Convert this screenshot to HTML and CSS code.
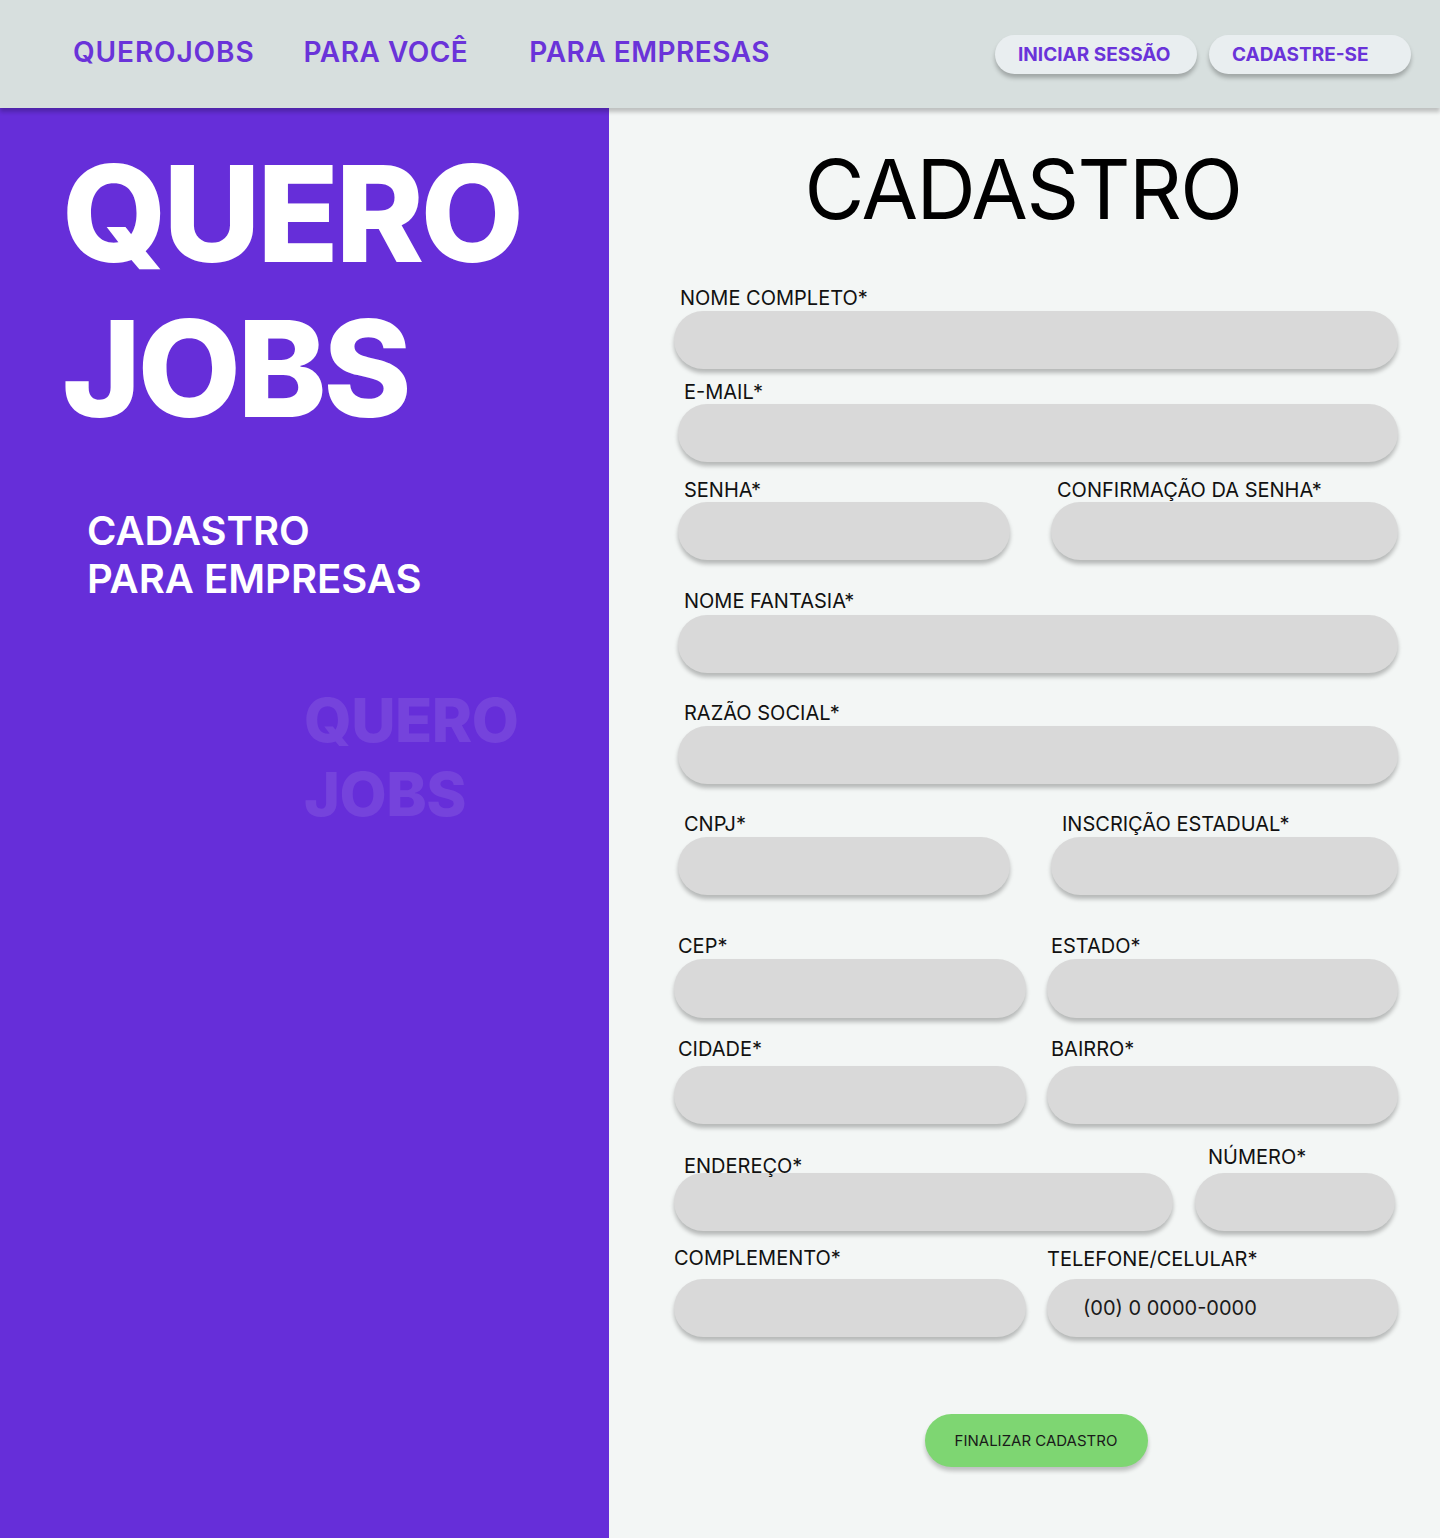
FILE: index.html
```html
<!DOCTYPE html>
<html lang="pt-BR">
<head>
<meta charset="utf-8">
<title>QueroJobs - Cadastro para empresas</title>
<link rel="stylesheet" href="styles.css">
</head>
<body>
<header class="topbar">
  <nav class="nav">
    <a class="nav-link nav-link-brand" href="#">QUEROJOBS</a>
    <a class="nav-link" href="#">PARA VOCÊ</a>
    <a class="nav-link nav-link-wide" href="#">PARA EMPRESAS</a>
  </nav>
  <div class="auth">
    <a class="pill" href="#">INICIAR SESSÃO</a>
    <a class="pill" href="#">CADASTRE-SE</a>
  </div>
</header>
<main class="main">
  <section class="brand">
    <h1 class="brand-title">QUERO<br>JOBS</h1>
    <p class="brand-sub">CADASTRO<br>PARA EMPRESAS</p>
    <div class="brand-mark">QUERO<br>JOBS</div>
  </section>
  <section class="panel">
    <h2 class="panel-title">CADASTRO</h2>
    <form class="form">
      <div class="row row-1 cols-1">
        <label class="field"><span class="lbl in-6">NOME COMPLETO*</span><input class="input" type="text"></label>
      </div>
      <div class="row row-2 cols-1 shift">
        <label class="field"><span class="lbl in-6 gap-0">E-MAIL*</span><input class="input" type="email"></label>
      </div>
      <div class="row row-3 cols-pass shift">
        <label class="field"><span class="lbl in-6 gap-0">SENHA*</span><input class="input" type="password"></label>
        <label class="field"><span class="lbl in-6 gap-0">CONFIRMAÇÃO DA SENHA*</span><input class="input" type="password"></label>
      </div>
      <div class="row row-4 cols-1 shift">
        <label class="field"><span class="lbl in-6 gap-2">NOME FANTASIA*</span><input class="input" type="text"></label>
      </div>
      <div class="row row-5 cols-1 shift">
        <label class="field"><span class="lbl in-6">RAZÃO SOCIAL*</span><input class="input" type="text"></label>
      </div>
      <div class="row row-6 cols-pass shift">
        <label class="field"><span class="lbl in-6">CNPJ*</span><input class="input" type="text"></label>
        <label class="field"><span class="lbl in-11">INSCRIÇÃO ESTADUAL*</span><input class="input" type="text"></label>
      </div>
      <div class="row row-7 cols-half">
        <label class="field"><span class="lbl in-4">CEP*</span><input class="input input-tall" type="text"></label>
        <label class="field"><span class="lbl in-4">ESTADO*</span><input class="input input-tall" type="text"></label>
      </div>
      <div class="row row-8 cols-half">
        <label class="field"><span class="lbl in-4 gap-5">CIDADE*</span><input class="input" type="text"></label>
        <label class="field"><span class="lbl in-4 gap-5">BAIRRO*</span><input class="input" type="text"></label>
      </div>
      <div class="row row-9 cols-addr">
        <label class="field"><span class="lbl in-10 overlap">ENDEREÇO*</span><input class="input" type="text"></label>
        <label class="field"><span class="lbl in-13 gap-4">NÚMERO*</span><input class="input" type="text"></label>
      </div>
      <div class="row row-10 cols-half">
        <label class="field"><span class="lbl gap-9">COMPLEMENTO*</span><input class="input" type="text"></label>
        <label class="field"><span class="lbl gap-8">TELEFONE/CELULAR*</span><input class="input input-phone" type="tel" placeholder="(00) 0 0000-0000"></label>
      </div>
      <div class="actions">
        <button class="submit" type="submit">FINALIZAR CADASTRO</button>
      </div>
    </form>
  </section>
</main>
</body>
</html>
```

FILE: styles.css
```css
* { box-sizing: border-box; }

html, body {
  margin: 0;
  padding: 0;
}

body {
  font-family: Inter, "Liberation Sans", sans-serif;
  background: #f3f6f5;
  color: #111;
  min-height: 1538px;
}

/* ---------- top bar ---------- */
.topbar {
  position: relative;
  z-index: 2;
  height: 108px;
  background: #d7dfde;
  box-shadow: 0 4px 4px rgba(0, 0, 0, 0.22);
  display: flex;
  align-items: center;
  justify-content: space-between;
  padding: 0 29px 0 73px;
}

.nav {
  display: flex;
  align-items: center;
  gap: 49px;
  margin-top: -4px;
}

.nav-link {
  color: #6a33d9;
  text-decoration: none;
  font-size: 28px;
  font-weight: 600;
  letter-spacing: 0.5px;
}

.nav-link-brand { letter-spacing: 0.9px; }

.nav-link-wide { margin-left: 12px; }

.auth {
  display: flex;
  gap: 12px;
}

.pill {
  width: 202px;
  height: 39px;
  border-radius: 20px;
  background: #e9eef0;
  box-shadow: 0 4px 4px rgba(0, 0, 0, 0.25);
  color: #6a33d9;
  font-size: 19px;
  font-weight: 700;
  text-decoration: none;
  display: flex;
  align-items: center;
  padding-left: 23px;
}

/* ---------- main ---------- */
.main {
  display: grid;
  grid-template-columns: 609px 1fr;
  min-height: 1430px;
}

.brand {
  background: #662ed9;
  padding: 28px 0 0 62px;
  color: #fff;
}

.brand-title {
  margin: 0;
  font-size: 134px;
  line-height: 155px;
  font-weight: 800;
  letter-spacing: -3.5px;
}

.brand-sub {
  margin: 61px 0 0 25px;
  font-size: 40px;
  line-height: 48px;
  font-weight: 600;
}

.brand-mark {
  margin: 80px 0 0 242px;
  font-size: 61px;
  line-height: 74px;
  font-weight: 800;
  color: rgba(255, 255, 255, 0.1);
  letter-spacing: -0.5px;
}

/* ---------- form panel ---------- */
.panel {
  background: #f3f6f5;
  padding: 32px 42px 0 65px;
}

.panel-title {
  margin: 0 26px 0 0;
  text-align: center;
  font-size: 82px;
  line-height: 100px;
  font-weight: 400;
  color: #000;
  letter-spacing: -1.5px;
}

.form {
  width: 724px;
}

.row {
  display: grid;
  align-items: end;
}

.shift { padding-left: 4px; }

.cols-1 { grid-template-columns: 1fr; }
.cols-pass { grid-template-columns: 332px 347px; column-gap: 41px; }
.cols-half { grid-template-columns: 352px 351px; column-gap: 21px; }
.cols-addr { grid-template-columns: 499px 200px; column-gap: 22px; }

.row-1 { margin-top: 46px; }
.row-2 { margin-top: 11px; }
.row-3 { margin-top: 16px; }
.row-4 { margin-top: 29px; }
.row-5 { margin-top: 28px; }
.row-6 { margin-top: 28px; }
.row-7 { margin-top: 39px; }
.row-8 { margin-top: 19px; }
.row-9 { margin-top: 21px; }
.row-10 { margin-top: 15px; }

.field {
  display: flex;
  flex-direction: column;
}

.lbl {
  display: block;
  font-size: 20px;
  line-height: 24px;
  font-weight: 400;
  color: #111;
  margin-bottom: 1px;
  white-space: nowrap;
  position: relative;
  z-index: 1;
}

.in-4 { padding-left: 4px; }
.in-6 { padding-left: 6px; }
.in-10 { padding-left: 10px; }
.in-11 { padding-left: 11px; }
.in-13 { padding-left: 13px; }

.gap-0 { margin-bottom: 0; }
.gap-2 { margin-bottom: 2px; }
.gap-4 { margin-bottom: 4px; }
.gap-5 { margin-bottom: 5px; }
.gap-8 { margin-bottom: 8px; }
.gap-9 { margin-bottom: 9px; }
.overlap { margin-bottom: -5px; }

.input {
  display: block;
  width: 100%;
  height: 58px;
  border: none;
  border-radius: 29px;
  background: #d9d9d9;
  box-shadow: 0 4px 4px rgba(0, 0, 0, 0.25);
  font-family: Inter, "Liberation Sans", sans-serif;
  font-size: 20px;
  color: #111;
  padding: 0 24px;
  outline: none;
}

.input-tall { height: 59px; }

.input-phone { padding-left: 36px; }

.input-phone::placeholder {
  color: #1a1a1a;
  opacity: 1;
}

.actions {
  display: flex;
  justify-content: center;
  margin-top: 77px;
}

.submit {
  width: 223px;
  height: 53px;
  border: none;
  border-radius: 27px;
  background: #7ed672;
  box-shadow: 0 4px 4px rgba(0, 0, 0, 0.22);
  font-family: Inter, "Liberation Sans", sans-serif;
  font-size: 15px;
  font-weight: 400;
  color: #1a1a1a;
  cursor: pointer;
}
```
